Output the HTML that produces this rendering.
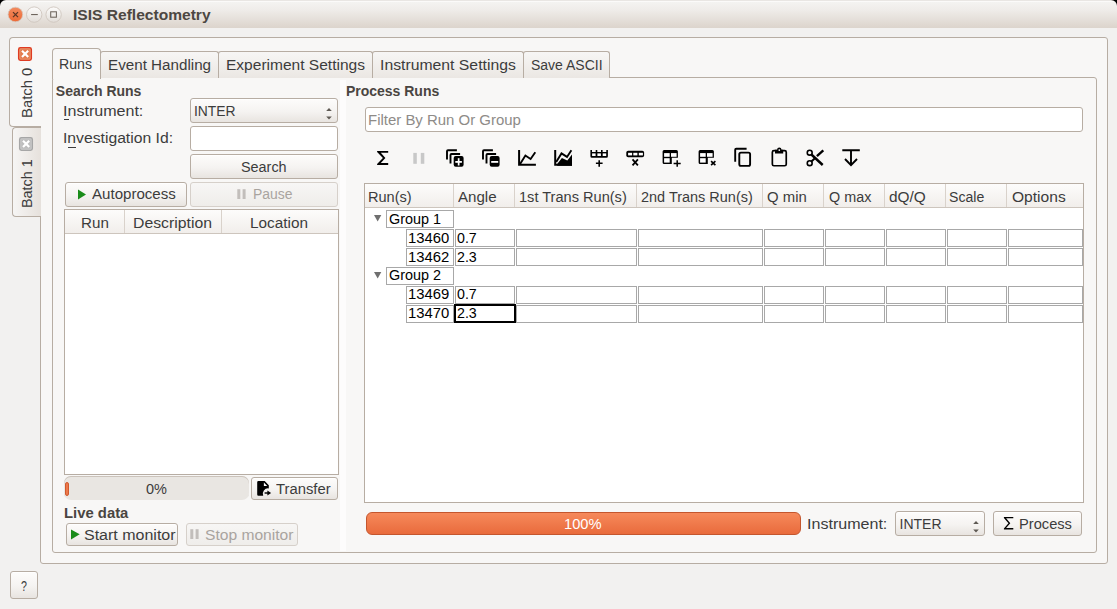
<!DOCTYPE html>
<html><head><meta charset="utf-8">
<style>
*{box-sizing:border-box;margin:0;padding:0}
html,body{width:1117px;height:609px;overflow:hidden}
body{background:#f2f1f0;font-family:"Liberation Sans",sans-serif;font-size:14px;color:#3c3c3c;position:relative}
.a{position:absolute}
.t{position:absolute;white-space:nowrap;line-height:1;transform-origin:0 0}
</style></head><body>
<div class="a" style="left:0px;top:0px;width:8px;height:8px;background:#000"></div>
<div class="a" style="left:1109px;top:0px;width:8px;height:8px;background:#000"></div>
<div class="a" style="left:0px;top:0px;width:1117px;height:28px;background:linear-gradient(#e9e6e3 0px,#e9e6e3 1px,#fbfaf9 1px,#fbfaf9 2px,#f4f3f1 2px,#efece9 10px,#dcd4cc 28px);border-radius:6px 6px 0 0"></div>
<svg class="a" style="left:0;top:0" width="70" height="28">
<defs>
<linearGradient id="gc" x1="0" y1="0" x2="0" y2="1"><stop offset="0" stop-color="#f38a5e"/><stop offset="1" stop-color="#ec6a36"/></linearGradient>
<linearGradient id="gm" x1="0" y1="0" x2="0" y2="1"><stop offset="0" stop-color="#fdfcfb"/><stop offset="1" stop-color="#e2ddd8"/></linearGradient>
</defs>
<circle cx="15.4" cy="14.5" r="7.3" fill="url(#gc)" stroke="#d6c9bf" stroke-width="0.8"/>
<path d="M13 12.1 L18 17.1 M18 12.1 L13 17.1" stroke="#5a3525" stroke-width="1.3"/>
<circle cx="34.2" cy="14.6" r="7.7" fill="url(#gm)" stroke="#cfc6be" stroke-width="0.9"/>
<rect x="31.1" y="14" width="6.7" height="1.1" fill="#6e655d"/>
<circle cx="53.6" cy="14.6" r="7.7" fill="url(#gm)" stroke="#cfc6be" stroke-width="0.9"/>
<rect x="50.7" y="11.8" width="5.7" height="5.4" fill="none" stroke="#6e655d" stroke-width="1.05"/>
</svg>
<div class="a" style="left:40px;top:37px;width:1068px;height:527px;background:#f8f7f6;border:1px solid #b7ada3;border-radius:0 3px 3px 3px"></div>
<div class="a" style="left:12px;top:127px;width:29px;height:90px;background:linear-gradient(90deg,#f6f5f4,#e6e1dc);border:1px solid #b7ada3;border-right:none;border-radius:4px 0 0 4px"></div>
<div class="a" style="left:9px;top:37px;width:32px;height:90px;background:#f8f7f6;border:1px solid #b7ada3;border-right:none;border-radius:4px 0 0 4px"></div>
<div class="a" style="left:40px;top:38px;width:2px;height:88px;background:#f8f7f6"></div>
<div class="a" style="left:52px;top:77px;width:1045px;height:476px;background:#f8f7f6;border:1px solid #b7ada3;border-radius:3px"></div>
<div class="a" style="left:100px;top:51px;width:119px;height:27px;background:linear-gradient(#f7f6f5,#ebe7e3);border:1px solid #b7ada3;border-bottom:none;border-radius:3px 3px 0 0"></div>
<div class="a" style="left:218px;top:51px;width:155px;height:27px;background:linear-gradient(#f7f6f5,#ebe7e3);border:1px solid #b7ada3;border-bottom:none;border-radius:3px 3px 0 0"></div>
<div class="a" style="left:372px;top:51px;width:152px;height:27px;background:linear-gradient(#f7f6f5,#ebe7e3);border:1px solid #b7ada3;border-bottom:none;border-radius:3px 3px 0 0"></div>
<div class="a" style="left:523px;top:51px;width:87px;height:27px;background:linear-gradient(#f7f6f5,#ebe7e3);border:1px solid #b7ada3;border-bottom:none;border-radius:3px 3px 0 0"></div>
<div class="a" style="left:52px;top:48px;width:49px;height:31px;background:#f8f7f6;border:1px solid #b7ada3;border-bottom:none;border-radius:4px 4px 0 0"></div>
<div class="a" style="left:340px;top:80px;width:6px;height:471px;background:#fdfcfc"></div>
<div class="a" style="left:190px;top:98px;width:148px;height:25px;border:1px solid #b7ada3;border-radius:3px;background:linear-gradient(#fdfcfb,#f5f3f1 55%,#e8e4e0);box-shadow:inset 0 1px 0 #fff"></div>
<div class="a" style="left:190px;top:126px;width:148px;height:25px;border:1px solid #b7ada3;border-radius:3px;background:#fff"></div>
<div class="a" style="left:190px;top:154px;width:148px;height:25px;border:1px solid #b7ada3;border-radius:3px;background:linear-gradient(#fdfcfb,#f5f3f1 55%,#e8e4e0);box-shadow:inset 0 1px 0 #fff"></div>
<div class="a" style="left:65px;top:182px;width:122px;height:25px;border:1px solid #b7ada3;border-radius:3px;background:linear-gradient(#fdfcfb,#f5f3f1 55%,#e8e4e0);box-shadow:inset 0 1px 0 #fff"></div>
<div class="a" style="left:190px;top:182px;width:148px;height:25px;border:1px solid #d6d0ca;border-radius:3px;background:linear-gradient(#f7f6f5,#efedea)"></div>
<div class="a" style="left:64px;top:209px;width:275px;height:266px;background:#fff;border:1px solid #b7ada3"></div>
<div class="a" style="left:65px;top:210px;width:273px;height:24px;background:linear-gradient(#fdfcfb,#f1eeeb);border-bottom:1px solid #cdc5bd"></div>
<div class="a" style="left:124px;top:210px;width:1px;height:23px;background:#d9d2cb"></div>
<div class="a" style="left:221px;top:210px;width:1px;height:23px;background:#d9d2cb"></div>
<div class="a" style="left:64px;top:476px;width:185px;height:24px;background:#e9e6e2;border-radius:7px;box-shadow:inset 0 1px 0 #cbc3bb"></div>
<div class="a" style="left:65px;top:482px;width:4px;height:14px;background:linear-gradient(90deg,#e4693b,#f48a5d 50%,#e4693b);border:1px solid #d25a2e;border-radius:2px"></div>
<div class="a" style="left:251px;top:477px;width:87px;height:23px;border:1px solid #b7ada3;border-radius:3px;background:linear-gradient(#fdfcfb,#f5f3f1 55%,#e8e4e0);box-shadow:inset 0 1px 0 #fff"></div>
<div class="a" style="left:66px;top:523px;width:112px;height:23px;border:1px solid #b7ada3;border-radius:3px;background:linear-gradient(#fdfcfb,#f5f3f1 55%,#e8e4e0);box-shadow:inset 0 1px 0 #fff"></div>
<div class="a" style="left:186px;top:523px;width:112px;height:23px;border:1px solid #d6d0ca;border-radius:3px;background:linear-gradient(#f7f6f5,#efedea)"></div>
<div class="a" style="left:365px;top:107px;width:718px;height:25px;border:1px solid #b7ada3;border-radius:3px;background:#fff"></div>
<div class="a" style="left:364px;top:183px;width:720px;height:320px;background:#fff;border:1px solid #b7ada3"></div>
<div class="a" style="left:365px;top:184px;width:718px;height:24px;background:linear-gradient(#fdfcfb,#f1eeeb);border-bottom:1px solid #cdc5bd"></div>
<div class="a" style="left:453px;top:184px;width:1px;height:23px;background:#d9d2cb"></div>
<div class="a" style="left:514px;top:184px;width:1px;height:23px;background:#d9d2cb"></div>
<div class="a" style="left:636px;top:184px;width:1px;height:23px;background:#d9d2cb"></div>
<div class="a" style="left:762px;top:184px;width:1px;height:23px;background:#d9d2cb"></div>
<div class="a" style="left:823px;top:184px;width:1px;height:23px;background:#d9d2cb"></div>
<div class="a" style="left:884px;top:184px;width:1px;height:23px;background:#d9d2cb"></div>
<div class="a" style="left:945px;top:184px;width:1px;height:23px;background:#d9d2cb"></div>
<div class="a" style="left:1006px;top:184px;width:1px;height:23px;background:#d9d2cb"></div>
<div class="a" style="left:386px;top:210px;width:68px;height:18px;border:1px solid #a8a8a8;background:#fff"></div>
<div class="a" style="left:386px;top:267px;width:68px;height:18px;border:1px solid #a8a8a8;background:#fff"></div>
<div class="a" style="left:406px;top:229px;width:48px;height:18px;border:1px solid #a8a8a8;background:#fff"></div>
<div class="a" style="left:455px;top:229px;width:60px;height:18px;border:1px solid #a8a8a8;background:#fff"></div>
<div class="a" style="left:516px;top:229px;width:121px;height:18px;border:1px solid #a8a8a8;background:#fff"></div>
<div class="a" style="left:638px;top:229px;width:125px;height:18px;border:1px solid #a8a8a8;background:#fff"></div>
<div class="a" style="left:764px;top:229px;width:60px;height:18px;border:1px solid #a8a8a8;background:#fff"></div>
<div class="a" style="left:825px;top:229px;width:60px;height:18px;border:1px solid #a8a8a8;background:#fff"></div>
<div class="a" style="left:886px;top:229px;width:60px;height:18px;border:1px solid #a8a8a8;background:#fff"></div>
<div class="a" style="left:947px;top:229px;width:60px;height:18px;border:1px solid #a8a8a8;background:#fff"></div>
<div class="a" style="left:1008px;top:229px;width:75px;height:18px;border:1px solid #a8a8a8;background:#fff"></div>
<div class="a" style="left:406px;top:248px;width:48px;height:18px;border:1px solid #a8a8a8;background:#fff"></div>
<div class="a" style="left:455px;top:248px;width:60px;height:18px;border:1px solid #a8a8a8;background:#fff"></div>
<div class="a" style="left:516px;top:248px;width:121px;height:18px;border:1px solid #a8a8a8;background:#fff"></div>
<div class="a" style="left:638px;top:248px;width:125px;height:18px;border:1px solid #a8a8a8;background:#fff"></div>
<div class="a" style="left:764px;top:248px;width:60px;height:18px;border:1px solid #a8a8a8;background:#fff"></div>
<div class="a" style="left:825px;top:248px;width:60px;height:18px;border:1px solid #a8a8a8;background:#fff"></div>
<div class="a" style="left:886px;top:248px;width:60px;height:18px;border:1px solid #a8a8a8;background:#fff"></div>
<div class="a" style="left:947px;top:248px;width:60px;height:18px;border:1px solid #a8a8a8;background:#fff"></div>
<div class="a" style="left:1008px;top:248px;width:75px;height:18px;border:1px solid #a8a8a8;background:#fff"></div>
<div class="a" style="left:406px;top:286px;width:48px;height:18px;border:1px solid #a8a8a8;background:#fff"></div>
<div class="a" style="left:455px;top:286px;width:60px;height:18px;border:1px solid #a8a8a8;background:#fff"></div>
<div class="a" style="left:516px;top:286px;width:121px;height:18px;border:1px solid #a8a8a8;background:#fff"></div>
<div class="a" style="left:638px;top:286px;width:125px;height:18px;border:1px solid #a8a8a8;background:#fff"></div>
<div class="a" style="left:764px;top:286px;width:60px;height:18px;border:1px solid #a8a8a8;background:#fff"></div>
<div class="a" style="left:825px;top:286px;width:60px;height:18px;border:1px solid #a8a8a8;background:#fff"></div>
<div class="a" style="left:886px;top:286px;width:60px;height:18px;border:1px solid #a8a8a8;background:#fff"></div>
<div class="a" style="left:947px;top:286px;width:60px;height:18px;border:1px solid #a8a8a8;background:#fff"></div>
<div class="a" style="left:1008px;top:286px;width:75px;height:18px;border:1px solid #a8a8a8;background:#fff"></div>
<div class="a" style="left:406px;top:305px;width:48px;height:18px;border:1px solid #a8a8a8;background:#fff"></div>
<div class="a" style="left:454px;top:304px;width:62px;height:19px;border:2px solid #000;background:#fff"></div>
<div class="a" style="left:516px;top:305px;width:121px;height:18px;border:1px solid #a8a8a8;background:#fff"></div>
<div class="a" style="left:638px;top:305px;width:125px;height:18px;border:1px solid #a8a8a8;background:#fff"></div>
<div class="a" style="left:764px;top:305px;width:60px;height:18px;border:1px solid #a8a8a8;background:#fff"></div>
<div class="a" style="left:825px;top:305px;width:60px;height:18px;border:1px solid #a8a8a8;background:#fff"></div>
<div class="a" style="left:886px;top:305px;width:60px;height:18px;border:1px solid #a8a8a8;background:#fff"></div>
<div class="a" style="left:947px;top:305px;width:60px;height:18px;border:1px solid #a8a8a8;background:#fff"></div>
<div class="a" style="left:1008px;top:305px;width:75px;height:18px;border:1px solid #a8a8a8;background:#fff"></div>
<svg class="a" style="left:370px;top:210px" width="16" height="80"><path d="M4 5 L11.3 5 L7.65 11.4 Z" fill="#6f6f6f"/><path d="M4 62 L11.3 62 L7.65 68.4 Z" fill="#6f6f6f"/></svg>
<div class="a" style="left:366px;top:512px;width:435px;height:23px;background:linear-gradient(#f6895b,#e96b3c);border:1px solid #c4562e;border-radius:6px"></div>
<div class="a" style="left:895px;top:511px;width:90px;height:25px;border:1px solid #b7ada3;border-radius:3px;background:linear-gradient(#fdfcfb,#f5f3f1 55%,#e8e4e0);box-shadow:inset 0 1px 0 #fff"></div>
<div class="a" style="left:993px;top:511px;width:89px;height:25px;border:1px solid #b7ada3;border-radius:3px;background:linear-gradient(#fdfcfb,#f5f3f1 55%,#e8e4e0);box-shadow:inset 0 1px 0 #fff"></div>
<div class="a" style="left:10px;top:571px;width:28px;height:28px;border:1px solid #b7ada3;border-radius:3px;background:linear-gradient(#fdfcfb,#f5f3f1 55%,#e8e4e0);box-shadow:inset 0 1px 0 #fff"></div>
<svg class="a" style="left:323.5px;top:106.8px" width="10" height="14"><path d="M2.2 4.1 L7.8 4.1 L5 1 Z M2.2 9.4 L7.8 9.4 L5 12.5 Z" fill="#5e5953"/></svg>
<svg class="a" style="left:970.5px;top:519.8px" width="10" height="14"><path d="M2.2 4.1 L7.8 4.1 L5 1 Z M2.2 9.4 L7.8 9.4 L5 12.5 Z" fill="#5e5953"/></svg>
<svg class="a" style="left:77px;top:189px" width="10" height="11"><path d="M1 0.5 L9 5.5 L1 10.5Z" fill="#1a8c1a"/></svg>
<svg class="a" style="left:71px;top:529px" width="10" height="11"><path d="M0 0.5 L8.7 5.3 L0 10.4Z" fill="#1a8c1a"/></svg>
<svg class="a" style="left:237px;top:189px" width="10" height="11"><rect x="0.3" y="0.2" width="3" height="9.8" fill="#c2bebb"/><rect x="5.6" y="0.2" width="3" height="9.8" fill="#c2bebb"/></svg>
<svg class="a" style="left:190px;top:529px" width="10" height="11"><rect x="0.3" y="0.2" width="3" height="9.8" fill="#c2bebb"/><rect x="5.6" y="0.2" width="3" height="9.8" fill="#c2bebb"/></svg>
<svg class="a" style="left:252px;top:478px" width="24" height="22" viewBox="252 478 24 22"><path d="M258.4 481.1 H264.7 L268.8 485.3 V488.4 A5.3 5.3 0 0 0 263.2 495.7 H258.4 Q257.2 495.7 257.2 494.5 V482.3 Q257.2 481.1 258.4 481.1 Z" fill="#000"/><path d="M263.9 482.6 V485.9 H267.2 Z" fill="#fff"/><path d="M264.6 493 H268.2" stroke="#000" stroke-width="1.4"/><path d="M267.4 490.4 L271.1 493 L267.4 495.6 Z" fill="#000"/></svg>
<svg class="a" style="left:1000px;top:514px" width="16" height="18" viewBox="1000 514 16 18"><path d="M1003.9 516.9 H1013.3 V518.3 H1006.1 L1010.3 523.2 L1006.1 528.1 H1013.3 V529.5 H1003.9 V528.5 L1008.5 523.2 L1003.9 517.9 Z" fill="#000"/></svg>
<div class="t" style="left:0;top:0;width:0;height:0"></div>
<svg class="a" style="left:14px;top:44px" width="22" height="20" viewBox="14 44 22 20"><rect x="18.6" y="47.6" width="12.8" height="12.8" rx="1.8" fill="#e37a4c" stroke="#df3b22" stroke-width="1.3"/><rect x="19.9" y="48.9" width="10.2" height="10.2" rx="0.8" fill="none" stroke="#eea07c" stroke-width="0.7"/><path d="M22 50.8 L28.2 57 M28.2 50.8 L22 57" stroke="#fff" stroke-width="2.2"/></svg>
<svg class="a" style="left:15px;top:134px" width="22" height="20" viewBox="15 134 22 20"><rect x="19.6" y="137.6" width="12.8" height="12.8" rx="1.8" fill="#bdbdbd" stroke="#a6a6a6" stroke-width="1.3"/><rect x="20.9" y="138.9" width="10.2" height="10.2" rx="0.8" fill="none" stroke="#d0d0d0" stroke-width="0.7"/><path d="M23 140.8 L29.2 147 M29.2 140.8 L23 147" stroke="#fff" stroke-width="2.2"/></svg>
<div class="t rot" style="left:19px;top:117.5px;font-size:15px;transform:rotate(-90deg) scaleX(0.99)">Batch 0</div>
<div class="t rot" style="left:19px;top:208.3px;font-size:15px;transform:rotate(-90deg) scaleX(0.96)">Batch 1</div>
<svg class="a" style="left:370px;top:145px" width="500" height="26" viewBox="370 145 500 26">
<g fill="none" stroke="#000" stroke-width="2" stroke-linejoin="miter">

</g>
<path d="M377.1 150.9 H388.2 V152.7 H380.8 L385.4 157.9 L380.8 163.1 H388.2 V164.9 H377.1 V163.9 L382.9 157.9 L377.1 151.9 Z" fill="#000"/>
<rect x="413.3" y="152.9" width="3.5" height="10.9" fill="#c8c8c8"/>
<rect x="420.8" y="152.9" width="3.5" height="10.9" fill="#c8c8c8"/>
<g transform="translate(0,0)"><path d="M447 159.6 V151.3 Q447 150.3 448 150.3 H456.9" fill="none" stroke="#000" stroke-width="1.9"/><path d="M450.5 163.6 V155 Q450.5 154 451.5 154 H460.1" fill="none" stroke="#000" stroke-width="1.9"/><rect x="453.7" y="156.1" width="9.9" height="10.7" rx="2" fill="#000"/><rect x="455.3" y="161" width="6.6" height="1.8" fill="#fff"/><rect x="457.8" y="158.2" width="1.7" height="7.3" fill="#fff"/></g><g transform="translate(36,0)"><path d="M447 159.6 V151.3 Q447 150.3 448 150.3 H456.9" fill="none" stroke="#000" stroke-width="1.9"/><path d="M450.5 163.6 V155 Q450.5 154 451.5 154 H460.1" fill="none" stroke="#000" stroke-width="1.9"/><rect x="453.7" y="156.1" width="9.9" height="10.7" rx="2" fill="#000"/><rect x="455.2" y="161" width="7" height="1.8" fill="#fff"/></g><path d="M519.1 150 V164.8 H535.9" fill="none" stroke="#000" stroke-width="2"/><path d="M520.1 163.9 L525.4 155.5 L530.6 159 L535.3 152.3" fill="none" stroke="#000" stroke-width="1.9"/><path d="M555.2 150 V164.8 H572" fill="none" stroke="#000" stroke-width="2"/><path d="M556.2 161.9 L561.5 153.4 L567 156.9 L571.4 150.2" fill="none" stroke="#000" stroke-width="1.9"/><path d="M557.2 164 L561.9 158 L567.3 160.5 L572 154.6 V165.7 H557.2Z" fill="#000"/><path d="M590.4 149.9 H592 V151.9 H595.7 V149.9 H597.3 V151.9 H601 V149.9 H602.6 V151.9 H606.3 V149.9 H607.9 V156.3 Q607.9 157.8 606.4 157.8 H591.9 Q590.4 157.8 590.4 156.3 Z" fill="#000"/><rect x="592.1" y="153.4" width="3.5" height="2.6" fill="#fff"/><rect x="597.4" y="153.4" width="3.5" height="2.6" fill="#fff"/><rect x="602.7" y="153.4" width="3.5" height="2.6" fill="#fff"/><path d="M595.9 163.3 H602.6 M599.2 160.2 V166.7" stroke="#000" stroke-width="1.6"/><rect x="626.3" y="150.8" width="17.8" height="6.4" rx="1.8" fill="#000"/><rect x="628.1" y="152.8" width="4" height="2.6" fill="#fff"/><rect x="633.3" y="152.8" width="4.1" height="2.6" fill="#fff"/><rect x="638.8" y="152.8" width="4.1" height="2.6" fill="#fff"/><path d="M632.5 159.4 L637.9 165.3 M637.9 159.4 L632.5 165.3" stroke="#000" stroke-width="1.8"/><g transform="translate(0,0)"><path d="M671.8 163.9 H664.1 Q662.6 163.9 662.6 162.4 V151.4 Q662.6 149.9 664.1 149.9 H676.4 Q677.9 149.9 677.9 151.4 V157.8 H671.8 Z" fill="#000"/><rect x="664.1" y="153.1" width="5.6" height="3.7" fill="#fff"/><rect x="671" y="153.1" width="5.6" height="3.7" fill="#fff"/><rect x="664.1" y="158.2" width="5.6" height="4.4" fill="#fff"/><path d="M673.6 163.4 H680.7 M677.2 160.2 V166.7" stroke="#000" stroke-width="1.5"/></g><g transform="translate(36,0)"><path d="M671.8 163.9 H664.1 Q662.6 163.9 662.6 162.4 V151.4 Q662.6 149.9 664.1 149.9 H676.4 Q677.9 149.9 677.9 151.4 V157.8 H671.8 Z" fill="#000"/><rect x="664.1" y="153.1" width="5.6" height="3.7" fill="#fff"/><rect x="671" y="153.1" width="5.6" height="3.7" fill="#fff"/><rect x="664.1" y="158.2" width="5.6" height="4.4" fill="#fff"/><path d="M675.1 161.1 L679.4 165.2 M679.4 161.1 L675.1 165.2" stroke="#000" stroke-width="1.6"/></g><path d="M735.2 161.8 V149.8 Q735.2 148.8 736.2 148.8 H746.6" fill="none" stroke="#000" stroke-width="1.9"/><rect x="739.3" y="152.6" width="10.8" height="13.3" rx="1.6" fill="none" stroke="#000" stroke-width="1.9"/><rect x="772.35" y="150.55" width="13.9" height="15.2" rx="1.6" fill="none" stroke="#000" stroke-width="1.7"/><path d="M775 149.7 H777.1 A2.2 2.2 0 0 1 781.5 149.7 H783.2 V153.6 H775 Z" fill="#000"/><circle cx="779.3" cy="150.1" r="0.9" fill="#fff"/><circle cx="809.7" cy="152.7" r="2.45" fill="none" stroke="#000" stroke-width="1.6"/><circle cx="809.7" cy="163.2" r="2.45" fill="none" stroke="#000" stroke-width="1.6"/><path d="M811.4 154.5 L822.7 165" stroke="#000" stroke-width="2.4" fill="none"/><path d="M811.4 161.4 L815.2 157.9" stroke="#000" stroke-width="2" fill="none"/><path d="M816.9 156.2 L823.3 150.3" stroke="#000" stroke-width="2.3" fill="none"/><path d="M842.3 150.3 H859.8 M851 151 V165.5 M845 159 L851 165.2 L857 159" stroke="#000" stroke-width="1.9" fill="none"/></svg>
<div class="t" style="left:72.56px;top:6.80px;font-size:15px;font-weight:bold;color:#4c4742;transform:scaleX(1.0379);">ISIS Reflectometry</div>
<div class="t" style="left:59.19px;top:57.00px;font-size:14px;transform:scaleX(1.0094);">Runs</div>
<div class="t" style="left:107.81px;top:57.50px;font-size:14px;transform:scaleX(1.0851);">Event Handling</div>
<div class="t" style="left:225.89px;top:57.70px;font-size:14px;transform:scaleX(1.1089);">Experiment Settings</div>
<div class="t" style="left:379.87px;top:57.70px;font-size:14px;transform:scaleX(1.1261);">Instrument Settings</div>
<div class="t" style="left:531.00px;top:57.70px;font-size:14px;">Save ASCII</div>
<div class="t" style="left:55.80px;top:83.50px;font-size:14px;font-weight:bold;color:#4a4541;">Search Runs</div>
<div class="t" style="left:63.35px;top:104.10px;font-size:14px;transform:scaleX(1.1471);">Instrument:</div>
<div class="t" style="left:63.38px;top:131.30px;font-size:14px;transform:scaleX(1.1219);">Investigation Id:</div>
<div class="t" style="left:194.21px;top:103.70px;font-size:14px;transform:scaleX(0.9902);">INTER</div>
<div class="t" style="left:240.67px;top:159.50px;font-size:14px;transform:scaleX(1.0279);">Search</div>
<div class="t" style="left:92.30px;top:187.40px;font-size:14px;transform:scaleX(1.0769);">Autoprocess</div>
<div class="t" style="left:252.61px;top:187.40px;font-size:14px;color:#a9a49f;transform:scaleX(0.9949);">Pause</div>
<div class="t" style="left:80.62px;top:216.00px;font-size:14px;transform:scaleX(1.0833);">Run</div>
<div class="t" style="left:133.37px;top:216.00px;font-size:14px;transform:scaleX(1.1275);">Description</div>
<div class="t" style="left:250.31px;top:216.00px;font-size:14px;transform:scaleX(1.0942);">Location</div>
<div class="t" style="left:145.90px;top:481.60px;font-size:14px;transform:scaleX(1.0350);">0%</div>
<div class="t" style="left:275.70px;top:481.60px;font-size:14px;transform:scaleX(1.0577);">Transfer</div>
<div class="t" style="left:63.54px;top:505.70px;font-size:14px;font-weight:bold;color:#4a4541;transform:scaleX(1.0600);">Live data</div>
<div class="t" style="left:84.26px;top:528.30px;font-size:14px;transform:scaleX(1.1430);">Start monitor</div>
<div class="t" style="left:205.19px;top:528.30px;font-size:14px;color:#a9a49f;transform:scaleX(1.1139);">Stop monitor</div>
<div class="t" style="left:345.90px;top:83.80px;font-size:14px;font-weight:bold;color:#4a4541;">Process Runs</div>
<div class="t" style="left:368.43px;top:112.90px;font-size:14px;color:#8e8b88;transform:scaleX(1.0683);">Filter By Run Or Group</div>
<div class="t" style="left:368.36px;top:189.80px;font-size:14px;transform:scaleX(1.0400);">Run(s)</div>
<div class="t" style="left:458.20px;top:189.80px;font-size:14px;transform:scaleX(1.0778);">Angle</div>
<div class="t" style="left:518.96px;top:189.80px;font-size:14px;transform:scaleX(1.0412);">1st Trans Run(s)</div>
<div class="t" style="left:641.30px;top:189.80px;font-size:14px;transform:scaleX(1.0333);">2nd Trans Run(s)</div>
<div class="t" style="left:767.40px;top:189.80px;font-size:14px;transform:scaleX(1.0649);">Q min</div>
<div class="t" style="left:828.60px;top:189.80px;font-size:14px;transform:scaleX(1.0268);">Q max</div>
<div class="t" style="left:889.40px;top:189.80px;font-size:14px;transform:scaleX(1.1000);">dQ/Q</div>
<div class="t" style="left:949.09px;top:189.80px;font-size:14px;transform:scaleX(1.0059);">Scale</div>
<div class="t" style="left:1011.60px;top:189.80px;font-size:14px;transform:scaleX(1.1125);">Options</div>
<div class="t" style="left:388.60px;top:212.10px;font-size:14px;color:#000;transform:scaleX(1.0280);">Group 1</div>
<div class="t" style="left:407.94px;top:230.70px;font-size:14px;color:#000;transform:scaleX(1.0605);">13460</div>
<div class="t" style="left:457.10px;top:230.70px;font-size:14px;color:#000;transform:scaleX(1.0158);">0.7</div>
<div class="t" style="left:407.94px;top:249.50px;font-size:14px;color:#000;transform:scaleX(1.0605);">13462</div>
<div class="t" style="left:457.10px;top:249.50px;font-size:14px;color:#000;transform:scaleX(1.0158);">2.3</div>
<div class="t" style="left:388.60px;top:268.20px;font-size:14px;color:#000;transform:scaleX(1.0280);">Group 2</div>
<div class="t" style="left:407.94px;top:287.20px;font-size:14px;color:#000;transform:scaleX(1.0605);">13469</div>
<div class="t" style="left:457.10px;top:287.20px;font-size:14px;color:#000;transform:scaleX(1.0158);">0.7</div>
<div class="t" style="left:407.94px;top:305.80px;font-size:14px;color:#000;transform:scaleX(1.0605);">13470</div>
<div class="t" style="left:457.10px;top:305.80px;font-size:14px;color:#000;transform:scaleX(1.0158);">2.3</div>
<div class="t" style="left:563.95px;top:517.00px;font-size:14px;color:#fff;transform:scaleX(1.0486);">100%</div>
<div class="t" style="left:807.45px;top:517.10px;font-size:14px;transform:scaleX(1.1471);">Instrument:</div>
<div class="t" style="left:899.50px;top:517.10px;font-size:14px;">INTER</div>
<div class="t" style="left:1019.35px;top:517.10px;font-size:14px;transform:scaleX(1.0469);">Process</div>
<div class="t" style="left:21.10px;top:579.00px;font-size:14px;transform:scaleX(0.7625);">?</div>
<div class="a" style="left:64px;top:119px;width:5px;height:1px;background:#3c3c3c"></div>
<div class="a" style="left:68px;top:147px;width:8px;height:1px;background:#3c3c3c"></div>
</body></html>
